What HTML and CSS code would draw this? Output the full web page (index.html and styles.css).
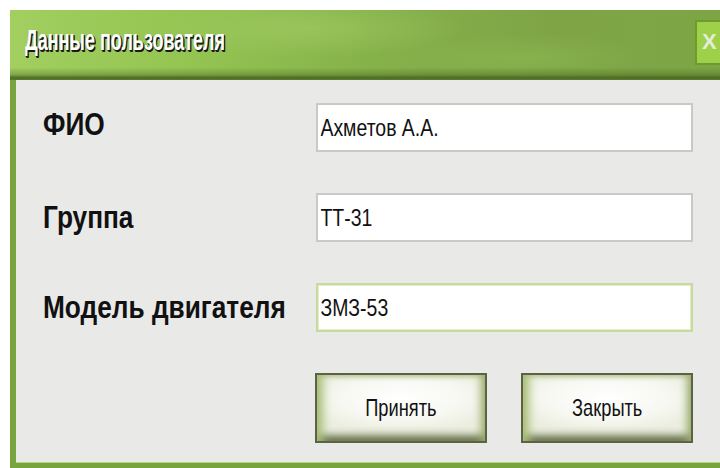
FILE: index.html
```html
<!DOCTYPE html>
<html lang="ru">
<head>
<meta charset="utf-8">
<title>Данные пользователя</title>
<link rel="stylesheet" href="styles.css">
</head>
<body>
<div class="window">
  <div class="titlebar">
    <span class="title"><span class="narrow">Данные пользователя</span></span>
    <span class="close">X</span>
  </div>
  <div class="panel">
    <form class="form">
      <label class="label label-up" for="fio"><span class="narrow">ФИО</span></label>
      <div class="field"><input class="field-input" id="fio" type="text" value="Ахметов А.А."></div>

      <label class="label" for="group"><span class="narrow">Группа</span></label>
      <div class="field"><input class="field-input" id="group" type="text" value="ТТ-31"></div>

      <label class="label" for="engine"><span class="narrow">Модель двигателя</span></label>
      <div class="field field-active"><input class="field-input" id="engine" type="text" value="ЗМЗ-53"></div>

      <div class="actions">
        <button class="btn" type="button"><span class="narrow">Принять</span></button>
        <button class="btn" type="button"><span class="narrow">Закрыть</span></button>
      </div>
    </form>
  </div>
</div>
</body>
</html>
```

FILE: styles.css
```css
html, body {
  margin: 0;
  padding: 0;
  background: #ffffff;
  overflow: hidden;
}

body {
  width: 720px;
  height: 468px;
  font-family: "Liberation Sans", Arial, sans-serif;
}

/* condensed lettering, like Arial Narrow */
.narrow {
  display: inline-block;
  white-space: nowrap;
  transform: scaleX(0.82);
  transform-origin: left center;
}

.window {
  margin: 10px 0 0 10px;
  width: 720px;
  height: 458px;
  display: flex;
  flex-direction: column;
}

/* green caption with the window title */
.titlebar {
  height: 70px;
  flex: none;
  display: flex;
  align-items: center;
  justify-content: space-between;
  padding-left: 15px;
  box-sizing: border-box;
  background:
    linear-gradient(to bottom, rgba(255,255,255,0) 0%, rgba(255,255,255,0) 82%, rgba(70,95,30,0.35) 92%, #4d6b24 97%, #5d7d31 100%),
    radial-gradient(ellipse 160px 30px at 300px 18px, rgba(170,210,110,0.45), rgba(170,210,110,0)),
    radial-gradient(ellipse 120px 25px at 520px 48px, rgba(150,200,90,0.35), rgba(150,200,90,0)),
    linear-gradient(to right, #a2cf60 0%, #94c452 25%, #86b24a 50%, #7ea446 75%, #7da545 100%);
}

.title {
  color: #ffffff;
  font-weight: bold;
  font-size: 30px;
  text-shadow: 1px 1px 0 #1a1a1a, 2px 2px 0 #1a1a1a, 2px 1px 0 #333;
  margin-top: -10px;
}

.title .narrow {
  transform: scaleX(0.6);
}

.close {
  width: 30px;
  height: 45px;
  margin: -6px 5px 0 0;
  box-sizing: border-box;
  border: 2px solid #6f9a2c;
  background: #9fd04a;
  color: #e4ecd8;
  font-weight: bold;
  font-size: 22px;
  display: flex;
  align-items: center;
  padding-left: 5px;
}

/* grey client area framed in green */
.panel {
  flex: 1;
  background: #e9e9e8;
  border-left: 6px solid #78a43e;
  border-bottom: 5px solid #78a43e;
  box-shadow: inset 0 -1px 0 #b9d58a;
  padding: 23px 0 0 27px;
}

.form {
  display: grid;
  grid-template-columns: 273px 377px;
  grid-template-rows: 49px 49px 49px 70px;
  row-gap: 41px;
  margin: 0;
}

.label {
  align-self: center;
  font-weight: bold;
  font-size: 32px;
  color: #111111;
  white-space: nowrap;
}

.label-up {
  margin-top: -6px;
}

.field {
  box-sizing: border-box;
  width: 377px;
  height: 49px;
  border: 2px solid #c9c9c9;
  background: #ffffff;
  overflow: hidden;
}

.field-active {
  border-color: #c6da9b;
  box-shadow: inset 0 0 0 1px #e4efc9;
}

.field-input {
  box-sizing: border-box;
  width: 460px;
  height: 100%;
  margin: 0;
  border: none;
  background: transparent;
  padding: 0 0 0 3px;
  font-family: "Liberation Sans", Arial, sans-serif;
  font-size: 24px;
  color: #111111;
  outline: none;
  transform: scaleX(0.81);
  transform-origin: left center;
}

.actions {
  grid-column: 2;
  display: flex;
  gap: 34px;
  margin-left: -1px;
}

/* raised olive buttons */
.btn {
  width: 174px;
  height: 70px;
  margin: 0;
  box-sizing: border-box;
  border: 2px solid #5d6148;
  background: radial-gradient(ellipse 100px 34px at 50% 35%, #ffffff 0%, #f7f8f2 60%, #eceee0 100%);
  box-shadow:
    inset 12px 0 10px -6px #a9bf78,
    inset -9px 0 9px -5px #9aae6c,
    inset 0 -10px 9px -5px #56623a,
    inset 0 5px 5px -3px #bccb9c;
  font-family: "Liberation Sans", Arial, sans-serif;
  font-size: 24px;
  color: #111111;
  padding: 0;
}

.btn .narrow {
  transform: scaleX(0.76);
  transform-origin: center;
}
```
